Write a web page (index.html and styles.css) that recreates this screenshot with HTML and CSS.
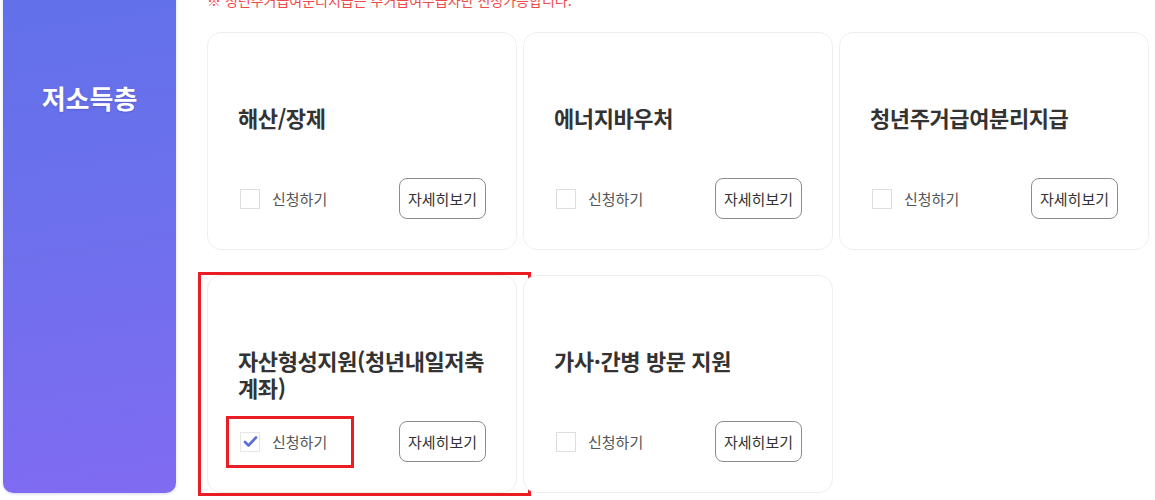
FILE: index.html
```html
<!DOCTYPE html>
<html lang="ko">
<head>
    <meta charset="utf-8" />
    <title>저소득층 서비스 신청</title>
    <link rel="stylesheet" href="styles.css">
</head>
<body>
    <div class="page">
        <aside class="side">
            <h2 class="side-title">저소득층</h2>
        </aside>

        <section class="main">
            <p class="note">※ 청년주거급여분리지급은 주거급여수급자만 신청가능합니다.</p>

            <div class="cards">
                <div class="card">
                    <h3 class="card-title">해산/장제</h3>
                    <div class="card-foot">
                        <label class="apply"><span class="box"></span>신청하기</label>
                        <button class="more">자세히보기</button>
                    </div>
                </div>

                <div class="card">
                    <h3 class="card-title">에너지바우처</h3>
                    <div class="card-foot">
                        <label class="apply"><span class="box"></span>신청하기</label>
                        <button class="more">자세히보기</button>
                    </div>
                </div>

                <div class="card">
                    <h3 class="card-title">청년주거급여분리지급</h3>
                    <div class="card-foot">
                        <label class="apply"><span class="box"></span>신청하기</label>
                        <button class="more">자세히보기</button>
                    </div>
                </div>

                <div class="card">
                    <h3 class="card-title"><span class="nowrap">자산형성지원(청년내일저축</span><span class="nowrap">계좌)</span></h3>
                    <div class="card-foot">
                        <label class="apply">
                            <span class="box checked">
                                <svg width="20" height="20" viewBox="0 0 20 20"><polyline points="5,10 8.5,13.5 16,5.5" fill="none" stroke="#5b6fd9" stroke-width="2.6" stroke-linecap="round" stroke-linejoin="round" /></svg>
                            </span>신청하기
                        </label>
                        <button class="more">자세히보기</button>
                    </div>
                    <!-- 표시 박스 -->
                    <span class="mark mark-card"></span>
                    <span class="mark mark-check"></span>
                </div>

                <div class="card">
                    <h3 class="card-title">가사·간병 방문 지원</h3>
                    <div class="card-foot">
                        <label class="apply"><span class="box"></span>신청하기</label>
                        <button class="more">자세히보기</button>
                    </div>
                </div>
            </div>
        </section>
    </div>
</body>
</html>
```

FILE: styles.css
```css
* {
    margin: 0;
    padding: 0;
    box-sizing: border-box;
}

html {
    font-family: "Noto Sans CJK KR", "Noto Sans", sans-serif;
    background: #fff;
}

body {
    min-height: 500px;
    overflow: hidden;
}

.page {
    display: flex;
    align-items: stretch;
    margin-top: -10px;
}

.side {
    width: 173px;
    margin-left: 3px;
    padding-top: 90px;
    background: linear-gradient(172deg, #6171e9 0%, #6d70ec 45%, #806bf2 100%);
    border-radius: 0 0 10px 10px;
    box-shadow: 0 1px 3px rgba(90, 90, 200, .25);
    text-align: center;
}

.side-title {
    font-size: 26px;
    line-height: 36px;
    font-weight: 700;
    color: #fff;
    text-shadow: 0 1px 2px rgba(40, 40, 120, .25);
}

.main {
    margin-left: 31px;
}

.note {
    font-size: 14px;
    line-height: 20px;
    color: #ef4a4a;
    margin-bottom: 22px;
}

.cards {
    display: grid;
    grid-template-columns: repeat(3, 310px);
    column-gap: 6px;
    row-gap: 25px;
}

.card {
    position: relative;
    height: 218px;
    display: flex;
    flex-direction: column;
    padding: 0 30px 30px;
    border: 1px solid #efefef;
    border-radius: 14px;
    background: #fff;
}

    .card .card-title {
        margin-top: 71px;
        margin-right: -8px;
        font-size: 22px;
        line-height: 27px;
        font-weight: 700;
        letter-spacing: -.4px;
        color: #333;
    }

.nowrap {
    display: inline-block;
    white-space: nowrap;
}

.card-foot {
    margin-top: auto;
    display: flex;
    align-items: center;
    justify-content: space-between;
}

.apply {
    display: flex;
    align-items: center;
    font-size: 15px;
    color: #555;
}

    .apply .box {
        display: flex;
        width: 20px;
        height: 20px;
        margin: 0 12px 0 2px;
        border: 1px solid #dedede;
        background: #fff;
    }

        .apply .box.checked {
            border-color: #e6e6e6;
        }

        .apply .box svg {
            margin: -1px;
        }

.more {
    width: 87px;
    height: 41px;
    font-family: inherit;
    font-size: 15px;
    color: #333;
    background: #fff;
    border: 1px solid #8d8d8d;
    border-radius: 8px;
}

.mark {
    position: absolute;
    border: 3px solid #ea1d25;
}

.mark-card {
    left: -10px;
    top: -4px;
    width: 333px;
    height: 224px;
}

.mark-check {
    left: 18px;
    top: 140px;
    width: 128px;
    height: 52px;
}
```
